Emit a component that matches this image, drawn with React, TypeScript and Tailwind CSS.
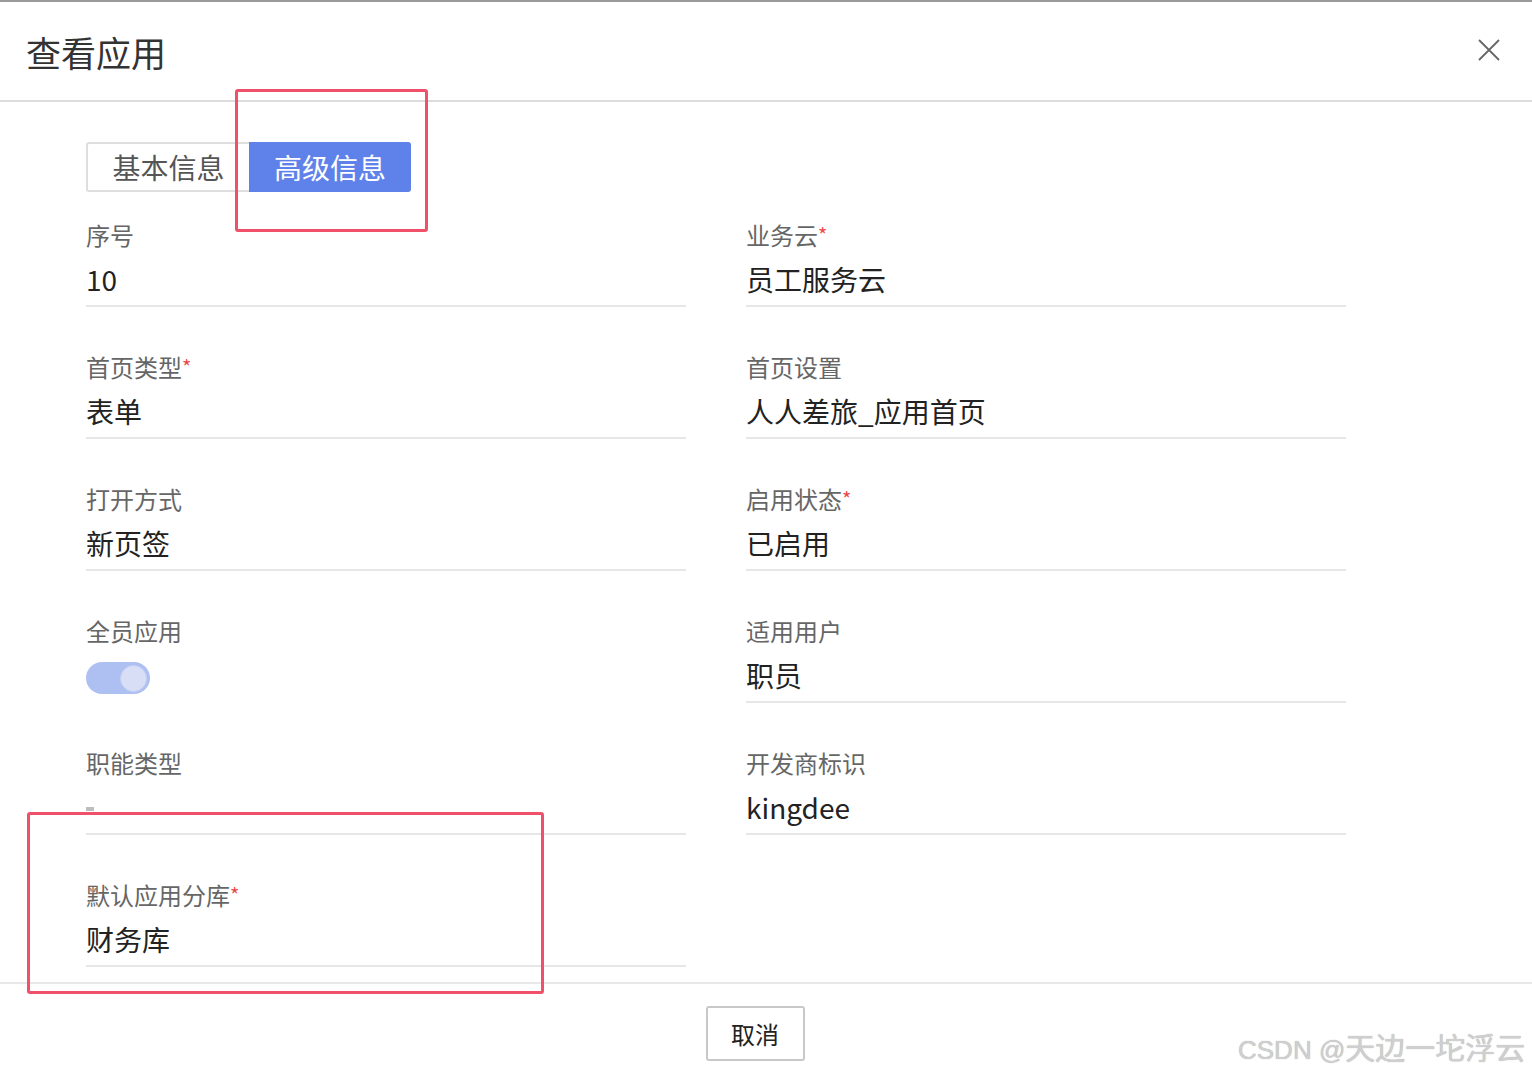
import React from "react";

const FONT = { fontFamily: '"Noto Sans CJK SC", "Noto Sans", sans-serif' };

function Field({ label, value, required }: { label: string; value?: React.ReactNode; required?: boolean }) {
  return (
    <div className="flex flex-col">
      <div className="h-[32px] text-[24px] leading-[32px] text-[#666]">
        {label}
        {required && <span className="text-[#f04848] text-[20px] align-top">*</span>}
      </div>
      <div className="mt-[10px] h-[36px] text-[28px] leading-[36px] text-[#222]">{value}</div>
      <div className="mt-[8px] h-[2px] bg-[#e6e6e6]" />
    </div>
  );
}

export default function App() {
  return (
    <div className="relative w-[1532px] h-[1074px] bg-white overflow-hidden" style={FONT}>
      <div className="h-[2px] bg-[#9a9a9a]" />
      {/* header */}
      <div className="h-[100px] flex items-center justify-between pl-[26px] pr-[32px] border-b-2 border-[#dcdcdc]">
        <div className="text-[35px] leading-[40px] text-[#333] mt-[2px]">查看应用</div>
        <svg width="22" height="22" viewBox="0 0 22 22" className="-mt-[2px]">
          <path d="M1 1 L21 21 M21 1 L1 21" stroke="#666" strokeWidth="1.8" fill="none" />
        </svg>
      </div>

      {/* body */}
      <div className="pl-[86px] pt-[40px]">
        <div className="flex h-[50px]">
          <div className="w-[163px] h-[50px] flex items-center justify-center border-2 border-r-0 border-[#dedede] rounded-l-[3px] text-[28px] text-[#555]">
            基本信息
          </div>
          <div className="w-[162px] h-[50px] flex items-center justify-center bg-[#5e82ea] rounded-r-[3px] text-[28px] text-white">
            高级信息
          </div>
        </div>

        <div className="mt-[27px] grid grid-cols-[600px_600px] gap-x-[60px] gap-y-[44px]">
          <Field label="序号" value="10" />
          <Field label="业务云" required value="员工服务云" />
          <Field label="首页类型" required value="表单" />
          <Field label="首页设置" value="人人差旅_应用首页" />
          <Field label="打开方式" value="新页签" />
          <Field label="启用状态" required value="已启用" />
          <div className="flex flex-col">
            <div className="h-[32px] text-[24px] leading-[32px] text-[#666]">全员应用</div>
            <div className="mt-[15px] w-[64px] h-[32px] rounded-full bg-[#aebff2] flex items-center justify-end pr-[3px]">
              <div className="w-[27px] h-[27px] rounded-full bg-[#d8def5] border border-[#c4cff2]" />
            </div>
          </div>
          <Field label="适用用户" value="职员" />
          <Field
            label="职能类型"
            value={<div className="mt-[18px] w-[8px] h-[4px] bg-[#bdbdbd]" />}
          />
          <Field label="开发商标识" value="kingdee" />
          <Field label="默认应用分库" required value="财务库" />
          <div />
        </div>
      </div>

      {/* footer */}
      <div className="absolute left-0 right-0 top-[982px] border-t-2 border-[#e8e8e8] h-[92px]">
        <div className="flex justify-center pr-[22px] pt-[22px]">
          <button className="w-[99px] h-[55px] border-2 border-[#c8c8c8] rounded-[3px] bg-white text-[24px] text-[#222] flex items-center justify-center">
            取消
          </button>
        </div>
      </div>

      {/* watermark */}
      <div
        className="absolute left-[1238px] top-[1026px] leading-[40px] text-[#cfcfcf] whitespace-nowrap flex items-baseline"
        style={{ textShadow: "0 0 1px #aaa" }}
      >
        <span className="text-[26px]" style={{ fontFamily: '"Liberation Sans", sans-serif' }}>CSDN @</span>
        <span className="text-[30px]" style={FONT}>天边一坨浮云</span>
      </div>

      {/* annotation boxes */}
      <div className="absolute left-[235px] top-[89px] w-[193px] h-[143px] border-[3px] border-[#f0506a] rounded-[3px]" />
      <div className="absolute left-[27px] top-[812px] w-[517px] h-[182px] border-[3px] border-[#f0506a] rounded-[3px]" />
    </div>
  );
}
